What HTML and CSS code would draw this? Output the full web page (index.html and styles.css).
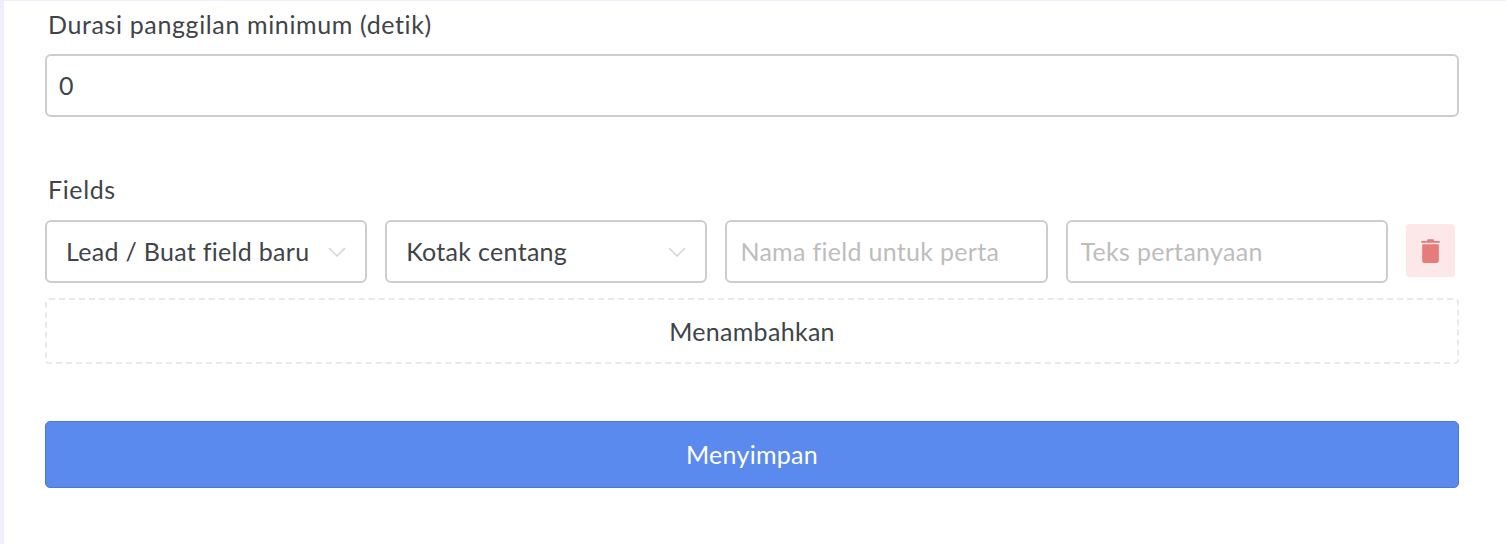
FILE: index.html
```html
<!DOCTYPE html>
<html lang="id">
<head>
    <meta charset="UTF-8">
    <meta name="viewport" content="width=device-width, initial-scale=1.0">
    <title>Fields</title>
    <link rel="stylesheet" href="styles.css">
</head>
<body>
    <div class="card">
        <form class="form">
            <div class="form-group">
                <label class="form-label" for="duration">Durasi panggilan minimum (detik)</label>
                <input type="text" id="duration" class="form-control" value="0">
            </div>

            <div class="form-group fields-group">
                <label class="form-label">Fields</label>
                <div class="field-row">
                    <div class="select-box">
                        <span>Lead / Buat field baru</span>
                        <svg class="chevron" viewBox="0 0 18 10"><path d="M1 1l8 8 8-8"/></svg>
                    </div>
                    <div class="select-box">
                        <span>Kotak centang</span>
                        <svg class="chevron" viewBox="0 0 18 10"><path d="M1 1l8 8 8-8"/></svg>
                    </div>
                    <input type="text" class="form-control" placeholder="Nama field untuk perta">
                    <input type="text" class="form-control" placeholder="Teks pertanyaan">
                    <button type="button" class="btn-remove" aria-label="Hapus">
                        <svg viewBox="0 0 18 24"><path d="M6.2 1.2h5.6l.9 1.6h4.600c.4 0 .7.3.7.7v1.100H0V3.500c0-.4.3-.7.7-.7h4.600zM1 6h16v15.800c0 1.200-1 2.200-2.200 2.200H3.200C2 24 1 23 1 21.800z"/></svg>
                    </button>
                </div>
                <button type="button" class="btn-add">Menambahkan</button>
            </div>

            <button type="submit" class="btn-save">Menyimpan</button>
        </form>
    </div>
</body>
</html>
```

FILE: styles.css
```css
* {
    margin: 0;
    padding: 0;
    box-sizing: border-box;
}

html,
body {
    height: 100%;
}

body {
    font-family: "Lato", "Noto Sans", sans-serif;
    font-size: 25px;
    letter-spacing: 0.3px;
    color: #3f4449;
    background-color: #f0eefa;
    overflow: hidden;
}

.card {
    height: calc(100% - 1px);
    margin: 1px 0 0 4px;
    padding: 0 47px 0 41px;
    background-color: #fff;
}

.form-label {
    display: block;
    height: 53px;
    padding: 7px 0 0 3px;
    line-height: 32px;
    letter-spacing: 0.63px;
}

.form-control {
    width: 100%;
    height: 63px;
    padding: 0 12px 1px 13px;
    border: 2px solid #cdcdcd;
    border-radius: 6px;
    font: inherit;
    letter-spacing: inherit;
    color: inherit;
    background-color: #fff;
    outline: none;
}

.form-control::placeholder {
    color: #bdbdbd;
    opacity: 1;
}

#duration {
    padding-left: 12px;
}

.fields-group {
    margin-top: 56px;
}

.fields-group .form-label {
    height: 47px;
    padding-top: 0;
}

.field-row {
    display: grid;
    grid-template-columns: repeat(4, 322.2px) 49px;
    column-gap: 18px;
    align-items: start;
}

.select-box {
    display: flex;
    align-items: center;
    justify-content: space-between;
    height: 63px;
    padding: 0 19px;
    border: 2px solid #cdcdcd;
    border-radius: 6px;
}

.select-box span {
    margin-top: -1px;
}

.chevron {
    width: 18px;
    height: 10px;
    fill: none;
    stroke: #d4d4d4;
    stroke-width: 1.5;
}

.btn-remove {
    display: flex;
    align-items: center;
    justify-content: center;
    height: 53px;
    margin-top: 4px;
    border: none;
    border-radius: 4px;
    background-color: #fde8e8;
}

.btn-remove svg {
    width: 19px;
    height: 25px;
    fill: #e57b7b;
}

.btn-add {
    display: block;
    width: 100%;
    height: 66px;
    margin-top: 15px;
    border: 2px dashed #e9e9e9;
    border-radius: 4px;
    font: inherit;
    letter-spacing: inherit;
    color: inherit;
    background-color: #fff;
}

.btn-save {
    display: block;
    width: 100%;
    height: 67px;
    margin-top: 57px;
    padding-bottom: 2px;
    border: 1px solid #4f78d0;
    border-radius: 5px;
    font: inherit;
    letter-spacing: inherit;
    color: #fff;
    background-color: #5b8aef;
}
```
